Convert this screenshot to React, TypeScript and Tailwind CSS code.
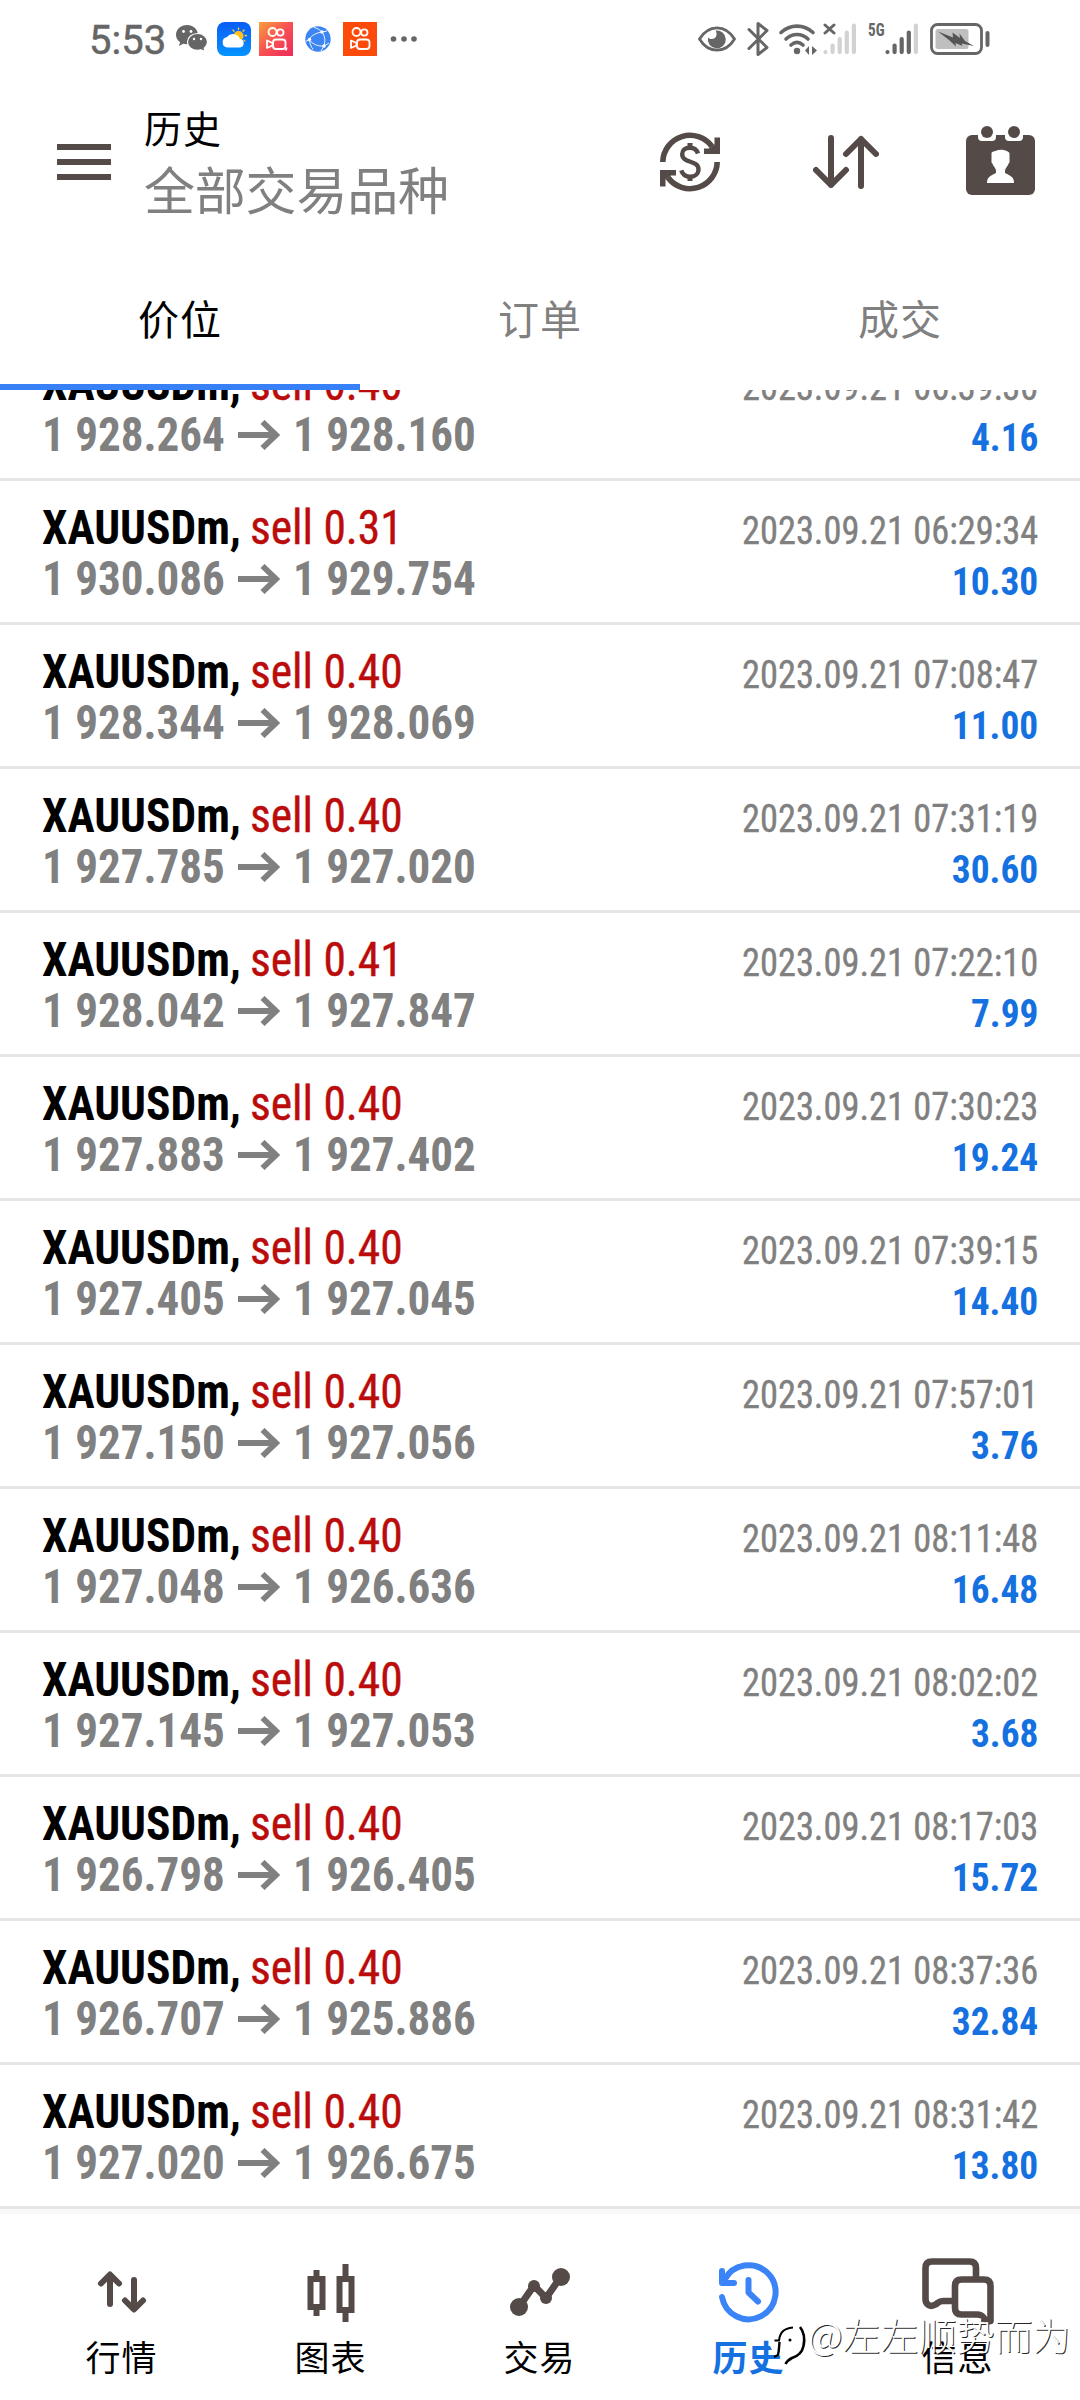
import type { ReactNode } from "react";

type Deal = { lots: string; from: string; to: string; time: string; profit: string };

const deals: Deal[] = [
  { lots: "0.40", from: "1 928.264", to: "1 928.160", time: "2023.09.21 06:39:30", profit: "4.16" },
  { lots: "0.31", from: "1 930.086", to: "1 929.754", time: "2023.09.21 06:29:34", profit: "10.30" },
  { lots: "0.40", from: "1 928.344", to: "1 928.069", time: "2023.09.21 07:08:47", profit: "11.00" },
  { lots: "0.40", from: "1 927.785", to: "1 927.020", time: "2023.09.21 07:31:19", profit: "30.60" },
  { lots: "0.41", from: "1 928.042", to: "1 927.847", time: "2023.09.21 07:22:10", profit: "7.99" },
  { lots: "0.40", from: "1 927.883", to: "1 927.402", time: "2023.09.21 07:30:23", profit: "19.24" },
  { lots: "0.40", from: "1 927.405", to: "1 927.045", time: "2023.09.21 07:39:15", profit: "14.40" },
  { lots: "0.40", from: "1 927.150", to: "1 927.056", time: "2023.09.21 07:57:01", profit: "3.76" },
  { lots: "0.40", from: "1 927.048", to: "1 926.636", time: "2023.09.21 08:11:48", profit: "16.48" },
  { lots: "0.40", from: "1 927.145", to: "1 927.053", time: "2023.09.21 08:02:02", profit: "3.68" },
  { lots: "0.40", from: "1 926.798", to: "1 926.405", time: "2023.09.21 08:17:03", profit: "15.72" },
  { lots: "0.40", from: "1 926.707", to: "1 925.886", time: "2023.09.21 08:37:36", profit: "32.84" },
  { lots: "0.40", from: "1 927.020", to: "1 926.675", time: "2023.09.21 08:31:42", profit: "13.80" },
];

function WeChat() {
  return (
    <svg className="h-[28px] w-[32px]" viewBox="0 0 32 28">
      <path fill="#666" d="M11 0C4.800 0 0 4.300 0 9.700c0 3 1.600 5.700 4.100 7.500L3 21l4.200-2.200c1.200.3 2.500.5 3.800.5 6 0 11-4.300 11-9.600S17 0 11 0z" />
      <path fill="#666" stroke="#fff" strokeWidth="1.200" d="M21.500 8.500c5.700 0 10 3.800 10 8.500 0 2.500-1.300 4.700-3.300 6.300l.8 3.200-3.800-1.700c-1.100.3-2.400.5-3.700.5-5.600 0-10-3.600-10-8.300s4.400-8.500 10-8.500z" />
      <circle cx="7.500" cy="6.500" r="1.400" fill="#fff" /><circle cx="15" cy="6.500" r="1.400" fill="#fff" />
      <circle cx="18" cy="14" r="1.200" fill="#fff" /><circle cx="25" cy="14" r="1.200" fill="#fff" />
    </svg>
  );
}

function Weather() {
  return (
    <svg className="h-[34px] w-[34px]" viewBox="0 0 34 34">
      <defs>
        <linearGradient id="sky" x1="0" y1="0" x2="0" y2="1"><stop offset="0" stopColor="#0a5cf5" /><stop offset="1" stopColor="#0594ff" /></linearGradient>
      </defs>
      <rect width="34" height="34" rx="8" fill="url(#sky)" />
      <g stroke="#ffc933" strokeWidth="1.300" strokeLinecap="round"><path d="M21.500 6v1.500M27 8l-1 1.300M29.500 13.500L28 13.700M28 19l-1.200-.8M16 8l1 1.300" /></g>
      <circle cx="21.500" cy="14" r="5" fill="#ffc21c" />
      <path fill="#fff" d="M10.500 25.500a5.300 5.300 0 0 1-.5-10.500 7.500 7.500 0 0 1 13 2 4.300 4.300 0 0 1 0 8.500z" />
    </svg>
  );
}

function Kuaishou({ lite }: { lite?: boolean }) {
  return (
    <svg className="h-[34px] w-[34px]" viewBox="0 0 34 34">
      <defs>
        <linearGradient id="lite" x1="0" y1="0" x2="1" y2="1"><stop offset="0" stopColor="#f9a03a" /><stop offset=".5" stopColor="#f75052" /><stop offset="1" stopColor="#ee2a5c" /></linearGradient>
      </defs>
      <rect width="34" height="34" fill={lite ? "url(#lite)" : "#fb4a0a"} />
      <g fill="none" stroke="#fff" strokeWidth="1.800" strokeLinejoin="round">
        <circle cx="13.500" cy="10" r="4" /><circle cx="21.300" cy="10.500" r="3.200" />
        <rect x="14" y="17.500" width="12.500" height="9.500" rx="3" />
        <path d="M13.500 21L8 18.500v7.500l5.500-2.500z" />
      </g>
      {lite && <path d="M27.500 25.500v1.500l-1 1.500" stroke="#fff" strokeWidth="1.600" fill="none" />}
    </svg>
  );
}

function Globe() {
  return (
    <svg className="h-[26px] w-[26px]" viewBox="0 0 26 26">
      <circle cx="13" cy="13" r="12.700" fill="#3d85f2" />
      <g stroke="#fff" strokeWidth="1" fill="none" opacity=".9"><path d="M17 6C11 7 7 9 4 13.500M4 13.500c4 5 9 7 15 6.500M17 6c3 4 3.500 9 2 14M17 6c-2-2-5-4-8-4.500M17 6l5-1M4 13.500l-3 2M4 13.500c1 4 2 7 4 10M19 20l-3 5M19 20l5-3" /></g>
      <circle cx="17" cy="6" r="1.700" fill="#fff" /><circle cx="4.500" cy="13.500" r="1.700" fill="#fff" /><circle cx="19" cy="20" r="1.700" fill="#fff" />
    </svg>
  );
}

function Bars({ filled }: { filled: number }) {
  const tops = [29, 22.500, 16, 9.500, 2.500];
  return (
    <>
      {tops.map((t, i) => (
        <path key={i} d={`M${2.5 + i * 7.1} ${t}V29.1`} stroke={i < filled ? "#666" : "#d2d2d2"} strokeWidth="4.200" strokeLinecap="round" />
      ))}
    </>
  );
}

function StatusBar() {
  return (
    <div className="flex h-[78px] items-center pr-[90px] pl-[89px]">
      <span className="w-[87px] pt-[4px] font-[Roboto] text-[40px] leading-[46px] text-[#666] [-webkit-text-stroke:0.500px]">5:53</span>
      <WeChat />
      <div className="flex items-center pl-[9px]">
        <Weather />
        <div className="w-[8px]" />
        <Kuaishou lite />
        <div className="w-[12px]" />
        <Globe />
        <div className="w-[12px]" />
        <Kuaishou />
        <svg className="ml-[13px] h-[8px] w-[28px]" viewBox="0 0 28 8" fill="#666"><circle cx="3.500" cy="4" r="2.800" /><circle cx="14" cy="4" r="2.800" /><circle cx="24" cy="4" r="2.800" /></svg>
      </div>
      <div className="ml-auto flex items-center">
        <svg className="h-[26px] w-[38px]" viewBox="0 0 38 26">
          <path d="M1.500 13C6 5.500 12 1.800 19 1.800S32 5.500 36.500 13C32 20.500 26 24.200 19 24.200S6 20.500 1.500 13z" fill="none" stroke="#666" strokeWidth="2.800" />
          <path d="M17.500 4.500a9 9 0 1 1-7.500 7c3 3 8 1.500 8.500-2.500.2-2-.2-3.500-1-4.500z" fill="#666" />
        </svg>
        <svg className="ml-[11px] h-[34px] w-[22px]" viewBox="0 0 22 34">
          <path d="M2 7.500l18 18-9 7V1.500l9 7-18 18" fill="none" stroke="#666" strokeWidth="3" strokeLinejoin="round" strokeLinecap="round" />
        </svg>
        <svg className="ml-[9px] h-[32px] w-[40px]" viewBox="0 0 40 32">
          <g fill="none" stroke="#666" strokeWidth="3.600" strokeLinecap="round"><path d="M3 9.500c9.500-8.500 22.500-8.500 32 0M8 16c6.500-6 15.500-6 22 0M13 22c4-3.500 8-3.500 12 0" /></g>
          <circle cx="19" cy="28" r="3.200" fill="#666" />
          <path d="M31 23v9l-4-4.500zM34 23v9l5-4.500z" fill="#666" />
        </svg>
        <svg className="ml-[5px] h-[32px] w-[36px]" viewBox="0 0 36 32">
          <Bars filled={0} />
          <path d="M2 2l9 8M11 2l-9 8" stroke="#666" strokeWidth="3" strokeLinecap="round" />
        </svg>
        <span className="mb-[18px] ml-[9px] w-[17px] origin-left scale-x-[.8] font-['Roboto_Condensed'] text-[19px] leading-[14px] font-bold text-[#666]">5G</span>
        <svg className="h-[32px] w-[36px]" viewBox="0 0 36 32"><Bars filled={4} /></svg>
        <svg className="ml-[9px] h-[32px] w-[60px]" viewBox="0 0 60 32">
          <rect x="1.500" y="1.500" width="50" height="29" rx="6" fill="none" stroke="#666" strokeWidth="2.800" />
          <rect x="5.500" y="6" width="33" height="20" rx="2.500" fill="#bfbfbf" />
          <path d="M8 8.500l15 6-.5-5 7.500 5.500-.5-4.500L35 18l9 5-12.500-2.500 1 2.500-7-3 .5 3.500-7-6.500z" fill="#555" />
          <path d="M57.500 10v12" stroke="#666" strokeWidth="4" strokeLinecap="round" />
        </svg>
      </div>
    </div>
  );
}

function Header() {
  return (
    <header className="flex h-[168px] items-center pr-[45px] pl-[57px] text-[#544a47]">
      <div className="flex w-[54px] flex-col gap-[9px]">
        <div className="h-[6px] bg-[#544a47]" />
        <div className="h-[6px] bg-[#544a47]" />
        <div className="h-[6px] bg-[#544a47]" />
      </div>
      <div className="ml-[33px] self-start pt-[24px]">
        <div className="h-[53px] text-[38px] leading-[50px] tracking-[1px] text-black">历史</div>
        <div className="text-[51px] leading-[66px] tracking-[-0.200px] text-[#808080]">全部交易品种</div>
      </div>
      <div className="ml-auto flex items-center">
        <svg className="h-[60px] w-[60px]" viewBox="0 0 60 60" fill="none" stroke="currentColor">
          <path d="M2.800 30A27.200 27.200 0 0 1 52 14.500M57.200 30A27.200 27.200 0 0 1 8 45.500" strokeWidth="5.600" />
          <path d="M54.500 5.500H60V22H44v-5.500h5l5.500-4zM5.500 54.500H0V38h16v5.500h-5l-5.500 4z" fill="currentColor" stroke="none" />
          <path d="M38 21.500C36.500 17 33.500 15.700 30 15.700c-5 0-7.800 2.700-7.800 6.300 0 10 16.300 5.500 16.300 15.300 0 4.500-3.500 7.400-8.200 7.400-4.600 0-7.800-2.300-9-6.400" strokeWidth="4.400" />
          <path d="M30 11v5M30 44v5" strokeWidth="5" />
        </svg>
        <svg className="ml-[93px] h-[54px] w-[66px]" viewBox="0 0 66 54" fill="none" stroke="currentColor" strokeWidth="6" strokeLinecap="round" strokeLinejoin="round">
          <path d="M18 3v47M3 35l15 15 15-15M48 51V4M33 19L48 4l15 15" />
        </svg>
        <svg className="mb-[3px] ml-[87px] h-[69px] w-[69px]" viewBox="0 0 69 69">
          <rect y="9" width="69" height="60" rx="6" fill="currentColor" />
          <path d="M12 8h18v3q0 4-4 4H16q-4 0-4-4zM39 8h18v3q0 4-4 4H43q-4 0-4-4z" fill="#fff" />
          <circle cx="21" cy="6" r="6" fill="currentColor" />
          <circle cx="48" cy="6" r="6" fill="currentColor" />
          <path d="M21 57c0-6 3-7 9-10 0-3 0-4-2-6.500-1-1-1-2.500-2.500-4V27c1-2 4-1.500 5-2.500 3-1 7-.7 9 0 1.500.8 4 1.500 4 3v9c-1.500 1.500-1.500 3-2.500 4-2 2.500-2 3.500-2 6.500 6 3 9 4 9 10z" fill="#fff" />
        </svg>
      </div>
    </header>
  );
}

function Tabs() {
  return (
    <div className="grid h-[144px] grid-cols-3 text-center text-[41px] leading-[60px] tracking-[1px] text-[#808080]">
      <div className="border-b-6 border-[#3880f5] pt-[41px] text-black">价位</div>
      <div className="pt-[41px]">订单</div>
      <div className="pt-[41px]">成交</div>
    </div>
  );
}

function Row({ deal }: { deal: Deal }) {
  return (
    <div className="h-[144px] border-b-3 border-[#e6e6e6] pt-[21px] pr-[42px] pl-[42px] font-['Roboto_Condensed'] text-[48px] leading-[51px] whitespace-nowrap">
      <div className="flex h-[51px] items-baseline">
        <span className="w-[208px] origin-left scale-x-[.946] font-bold text-black">XAUUSDm,</span>
        <span className="origin-left scale-x-[.948] text-[#bb0c0c] [-webkit-text-stroke:0.400px]">sell {deal.lots}</span>
        <span className="ml-auto origin-right scale-x-[.934] text-[39px] text-[#808080] [-webkit-text-stroke:0.400px]">{deal.time}</span>
      </div>
      <div className="flex h-[51px] items-baseline text-[#808080]">
        <span className="w-[196px] origin-left scale-x-[.938] font-bold">{deal.from}</span>
        <svg className="h-[30px] w-[42px] translate-y-[-1px]" viewBox="0 0 42 30" fill="none" stroke="currentColor" strokeWidth="5.800">
          <path d="M0 15h38M24.500 2L38 15 24.500 28" />
        </svg>
        <span className="ml-[13px] origin-left scale-x-[.938] font-bold">{deal.to}</span>
        <span className="ml-auto origin-right scale-x-[.958] text-[39px] font-bold text-[#1570e0]">{deal.profit}</span>
      </div>
    </div>
  );
}

function NavItem({ x, label, active, children }: { x: number; label: string; active?: boolean; children: ReactNode }) {
  return (
    <div className="flex w-[209px] flex-col items-center text-[#544a47]">
      <svg className="h-[84px] w-[209px]" viewBox={`${x} 2252 209 84`} fill="none" stroke="currentColor">
        {children}
      </svg>
      <span className={active ? "pl-[2px] text-[35px] leading-[40px] font-bold tracking-[1px] text-[#1570e0]" : "pl-[2px] text-[35px] leading-[40px] tracking-[1px] text-black"}>{label}</span>
    </div>
  );
}

function BottomNav() {
  return (
    <nav className="flex h-[186px] pt-[38px] pl-[16px]">
      <NavItem x={16} label="行情">
        <path d="M110 2304v-29M101 2283.500l9-9 9 9M134 2280v29M125 2300.500l9 9 9-9" strokeWidth="6" strokeLinecap="round" strokeLinejoin="round" />
      </NavItem>
      <NavItem x={225} label="图表">
        <path d="M310.500 2279h12v28h-12zM316.500 2270v8M316.500 2308v8M339.500 2279h12v31h-12zM345.500 2264v14M345.500 2311v11" strokeWidth="6" />
      </NavItem>
      <NavItem x={434} label="交易">
        <path d="M519 2307l15-21.500 12 12.500 15-21.500" strokeWidth="7" />
        <g fill="currentColor" stroke="none"><circle cx="519" cy="2307" r="9" /><circle cx="534" cy="2286" r="6" /><circle cx="546" cy="2298" r="6" /><circle cx="561" cy="2277" r="9" /></g>
      </NavItem>
      <NavItem x={643} label="历史" active>
        <g stroke="#3a84f7" strokeWidth="6" strokeLinecap="round" strokeLinejoin="round">
          <path d="M722 2297A27 27 0 1 0 724.500 2280M722 2271v12h12M748.500 2280v12.500l9.500 9" />
        </g>
      </NavItem>
      <NavItem x={852} label="信息">
        <path d="M976 2277v-9q0-6.500-6.500-6.500H932q-6.500 0-6.500 6.500v31c0 6 5 8.500 10 5.500 3-2 3.500-3.500 7.500-3.500h9M961.500 2314.500q-6.500 0-6.500-6.500v-22q0-6.500 6.500-6.500H984q6.500 0 6.500 6.500v35c-4 .5-6-1-7.500-4-1.500-2-3-2.500-6-2.500z" strokeWidth="6.600" strokeLinejoin="round" />
      </NavItem>
    </nav>
  );
}

function Watermark() {
  return (
    <div className="absolute top-[2309px] left-[770px] flex items-start">
      <svg className="h-[60px] w-[38px]" viewBox="0 0 38 60">
        <path d="M4 29l3-3c3-6 7-9 12-9 8 0 14 6 14 13 0 9-6 15-13 19l-2-7c-3 0-5 2-9 5h-4l-6-12z" fill="#fff" />
        <path d="M4.500 31.500h4.500c1-7.500 4-12 14-13" fill="none" stroke="#000" strokeWidth="2" />
        <path d="M9.500 33c-.5 6-.5 9-1.500 13l-4 2" fill="none" stroke="#000" strokeWidth="2.400" />
        <path d="M30 18c4 5 5 12 3.500 19-1.500 7-5 10-11.500 12-3 1.500-5 3-6.500 6" fill="none" stroke="#000" strokeWidth="2.600" />
        <circle cx="20" cy="31" r="1.500" fill="#000" />
      </svg>
      <span className="text-[38px] leading-[50px] font-light text-white [text-shadow:1px_1px_0_rgba(0,0,0,0.850)]">@左左顺势而为</span>
    </div>
  );
}

export default function App() {
  return (
    <div className="relative flex h-[2400px] w-[1080px] flex-col overflow-hidden bg-white font-['Noto_Sans_CJK_SC',sans-serif]">
      <StatusBar />
      <Header />
      <Tabs />
      <main className="h-[1819px] overflow-hidden">
        <div className="mt-[-53px]">
          {deals.map((d) => (
            <Row key={d.time} deal={d} />
          ))}
        </div>
      </main>
      <div className="h-[5px] bg-[#f8f8f8]" />
      <BottomNav />
      <Watermark />
    </div>
  );
}
